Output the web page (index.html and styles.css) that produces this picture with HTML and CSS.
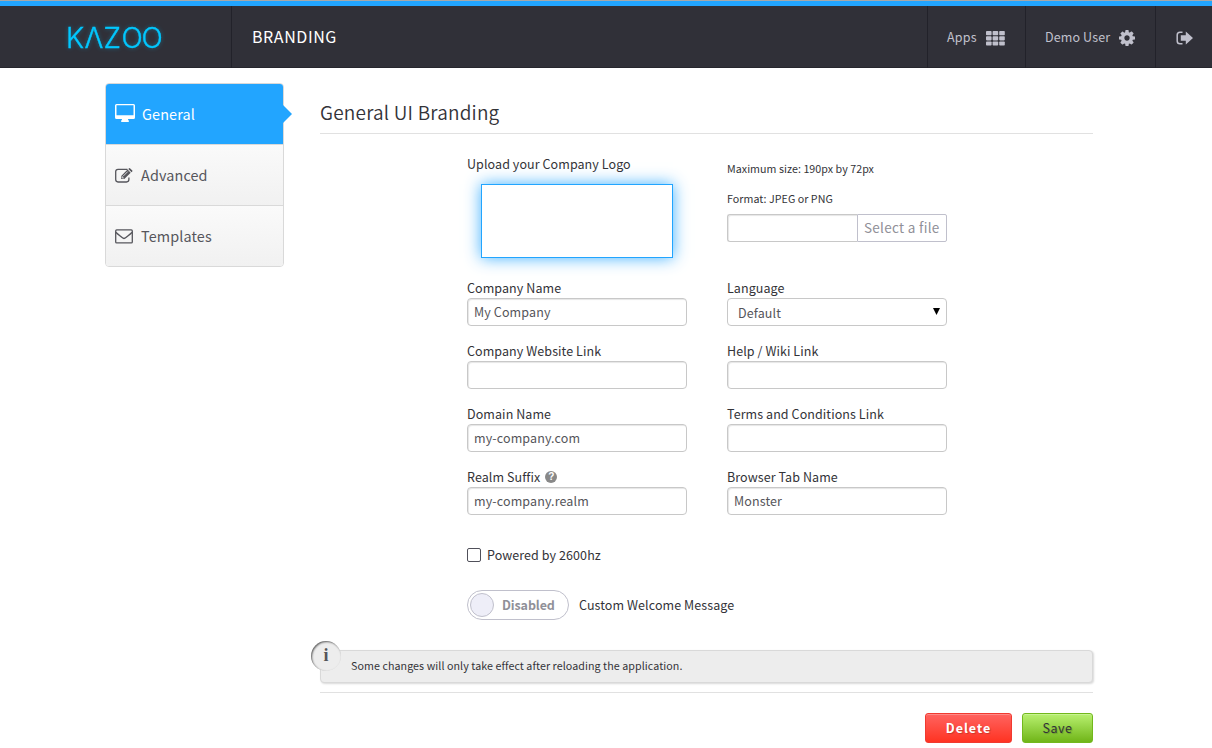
FILE: index.html
```html
<!DOCTYPE html>
<html lang="en">
<head>
<meta charset="utf-8">
<title>Monster</title>
<link rel="stylesheet" href="styles.css">
</head>
<body>
<header class="topbar">
  <div class="brand">
    <svg class="logo" width="110" height="34" viewBox="0 0 110 34" role="img" aria-label="Kazoo">
      <text class="logo-text" y="28" x="4 22.500 41.500 59.500 79.500">KΛZOO</text>
    </svg>
  </div>
  <div class="app-name">BRANDING</div>
  <nav class="topnav">
    <a class="nav-item nav-apps"><span>Apps</span>
      <svg width="19" height="15" viewBox="0 0 19 15" fill="currentColor"><rect width="5.6" height="4.2" rx=".8"/><rect x="6.6" width="5.6" height="4.2" rx=".8"/><rect x="13.2" width="5.6" height="4.2" rx=".8"/><rect y="5.2" width="5.6" height="4.2" rx=".8"/><rect x="6.6" y="5.2" width="5.6" height="4.2" rx=".8"/><rect x="13.2" y="5.2" width="5.6" height="4.2" rx=".8"/><rect y="10.4" width="5.6" height="4.2" rx=".8"/><rect x="6.6" y="10.4" width="5.6" height="4.2" rx=".8"/><rect x="13.2" y="10.4" width="5.6" height="4.2" rx=".8"/></svg>
    </a>
    <a class="nav-item nav-user"><span>Demo User</span>
      <svg width="16" height="16" viewBox="0 0 1536 1536" fill="currentColor"><path d="M1024 768q0-106-75-181t-181-75-181 75-75 181 75 181 181 75 181-75 75-181zm512-109v222q0 12-8 23t-20 13l-185 28q-19 54-39 91 35 50 107 138 10 12 10 25t-9 23q-27 37-99 108t-94 71q-12 0-26-9l-138-108q-44 23-91 38-16 136-29 186-7 28-36 28H657q-14 0-24.500-8.500T621 1506l-28-184q-49-16-90-37l-141 107q-10 9-25 9-14 0-25-11-126-114-165-168-7-10-7-23 0-12 8-23 15-21 51-66.500t54-70.500q-27-50-41-99L29 913q-13-2-21-12.500T0 877V655q0-12 8-23t19-13l186-28q14-46 39-92-40-57-107-138-10-12-10-24 0-10 9-23 26-36 98.500-107.500T337 135q13 0 26 10l138 107q44-23 91-38 16-136 29-186 7-28 36-28h222q14 0 24.500 8.500T915 30l28 184q49 16 90 37l142-107q9-9 24-9 13 0 25 10 129 119 165 170 7 8 7 22 0 12-8 23-15 21-51 66.500t-54 70.500q26 50 41 98l183 28q13 2 21 12.500t8 23.500z"/></svg>
    </a>
    <a class="nav-item nav-exit">
      <svg width="18" height="14" viewBox="0 0 18 14"><path d="M6.500 1.200H4Q1.200 1.200 1.200 4v6q0 2.800 2.800 2.800h2.500" fill="none" stroke="currentColor" stroke-width="1.500"/><path d="M4.800 4.300h5V.6L17 7l-7.200 6.400V9.700h-5z" fill="currentColor"/></svg>
    </a>
  </nav>
</header>
<main class="page">
  <aside class="menu">
    <a class="menu-item active">
      <svg width="20" height="18" viewBox="0 0 20 18"><path fill-rule="evenodd" fill="currentColor" d="M1.500 0h17Q20 0 20 1.500v12q0 1.500-1.500 1.500H13q0 1 .8 1.600V18H6.200v-1.400Q7 16 7 15H1.500Q0 15 0 13.500v-12Q0 0 1.500 0zm0 1.300v10h17v-10z"/></svg>
      <span>General</span></a>
    <a class="menu-item">
      <svg width="18" height="15" viewBox="0 0 18 15"><path d="M12.500 1.300H3Q.7 1.300.7 3.600v8q0 2.400 2.300 2.400h8.500q2.400 0 2.400-2.400V9.500" fill="none" stroke="currentColor" stroke-width="1.300"/><path d="M6.200 11.100V8L12.600 1.600l3.100 3.100-6.400 6.400zM13.300.9l.5-.5q.7-.7 1.400 0l1.900 1.900q.7.7 0 1.400l-.6.500z" fill="currentColor"/><path d="M8 8.300l4.800-4.800M7.200 8.300v1.700h1.700" stroke="#f6f6f6" stroke-width=".8" fill="none"/></svg>
      <span>Advanced</span></a>
    <a class="menu-item">
      <svg width="18" height="15" viewBox="0 0 18 15" fill="none" stroke="currentColor" stroke-width="1.300"><rect x=".7" y=".9" width="16.600" height="13" rx="1"/><path d="M.8 3.200Q2 4.500 5.500 7.200 8 9.500 9 9.500t3.500-2.300Q16 4.500 17.200 3.200"/></svg>
      <span>Templates</span></a>
  </aside>
  <section class="content">
    <h1 class="title">General UI Branding</h1>
    <form class="form">
      <div class="upload-row">
        <div class="col">
          <label class="label">Upload your Company Logo</label>
          <div class="logo-drop"></div>
        </div>
        <div class="col specs">
          <p class="spec">Maximum size: 190px by 72px</p>
          <p class="spec">Format: JPEG or PNG</p>
          <div class="file"><span class="file-name"></span><span class="file-btn">Select a file</span></div>
        </div>
      </div>
      <div class="grid">
        <div class="field"><label class="label">Company Name</label><div class="input">My Company</div></div>
        <div class="field"><label class="label">Language</label><div class="input select"><span>Default</span><svg width="7" height="7" viewBox="0 0 7 7"><path d="M0 0h7L3.500 7z"/></svg></div></div>
        <div class="field"><label class="label">Company Website Link</label><div class="input"></div></div>
        <div class="field"><label class="label">Help / Wiki Link</label><div class="input"></div></div>
        <div class="field"><label class="label">Domain Name</label><div class="input">my-company.com</div></div>
        <div class="field"><label class="label">Terms and Conditions Link</label><div class="input"></div></div>
        <div class="field"><label class="label label-help">Realm Suffix <span class="help">?</span></label><div class="input">my-company.realm</div></div>
        <div class="field"><label class="label">Browser Tab Name</label><div class="input">Monster</div></div>
      </div>
      <div class="check-row"><span class="checkbox"></span><span class="label">Powered by 2600hz</span></div>
      <div class="switch-row"><span class="switch"><span class="knob"></span><span class="switch-text">Disabled</span></span><span class="label">Custom Welcome Message</span></div>
    </form>
    <div class="notice"><span class="info">i</span><span>Some changes will only take effect after reloading the application.</span></div>
    <div class="actions"><a class="btn delete">Delete</a><a class="btn save">Save</a></div>
  </section>
</main>
</body>
</html>
```

FILE: styles.css
```css
* { box-sizing: border-box; }
body {
  margin: 0;
  height: 748px;
  overflow: hidden;
  background: #fff;
  color: #333338;
  font: 12.5px/20px "Noto Sans CJK SC", "Noto Sans", sans-serif;
  letter-spacing: .08px;
}
svg { display: block; flex: none; }
.topbar {
  display: flex;
  height: 68px;
  border-top: 6px solid #22a5ff;
  box-shadow: inset 0 -1px #26262d, inset 0 0 #000;
  background: #303038;
  position: relative;
}
.topbar::before {
  content: "";
  position: absolute;
  top: -6px;
  left: 0;
  right: 0;
  height: 1px;
  background: #a8a8a8;
}
.brand { width: 232px; border-right: 1px solid #22222a; padding: 14px 0 0 62px; }
.logo { overflow: visible; filter: drop-shadow(0 0 2px rgba(0, 180, 240, .4)); }
.logo-text { font: 300 28px Inter, sans-serif; fill: #00c8ff; stroke: #00c8ff; stroke-width: .4; letter-spacing: 0; }
.app-name { padding: 20px 0 0 20px; color: #fff; font-size: 16px; letter-spacing: .6px; }
.topnav { display: flex; margin-left: auto; color: #c0c0cc; }
.nav-item { display: flex; align-items: center; border-left: 1px solid #22222a; height: 62px; }
.nav-apps { width: 98px; padding-left: 19px; gap: 9px; letter-spacing: .25px; }
.nav-user { width: 130px; padding-left: 19px; gap: 9px; letter-spacing: .12px; }
.nav-exit { width: 57px; padding-left: 20px; }
.nav-item svg { position: relative; top: 1px; }

.page { display: flex; padding: 15px 0 0 105px; }
.menu { width: 179px; height: 184px; border: 1px solid #d9d9d9; border-radius: 4px; }
.menu-item {
  display: flex;
  align-items: center;
  gap: 8px;
  height: 61px;
  padding-left: 9px;
  border-bottom: 1px solid #d9d9d9;
  background: linear-gradient(#fafafa, #f1f1f1);
  color: #56565c;
  font-size: 14.4px;
  letter-spacing: .13px;
}
.menu-item:last-child { height: 60px; border-bottom: 0; border-radius: 0 0 3px 3px; }
.menu-item.active { position: relative; gap: 7px; background: #22a5ff; color: #fff; border-radius: 3px 3px 0 0; }
.active svg { position: relative; top: -1px; }
.active::after {
  content: "";
  position: absolute;
  left: 177px;
  top: 21px;
  border: 9px solid transparent;
  border-left-color: #22a5ff;
  border-right: 0;
}
.content { width: 773px; margin-left: 36px; }
.title {
  margin: 0;
  height: 51px;
  padding-top: 14px;
  border-bottom: 1px solid #e1e1e1;
  font-weight: 350;
  font-size: 19px;
  letter-spacing: .2px;
  line-height: 30px;
}
.form { padding: 20px 0 0 147px; }
.label { display: block; }
.upload-row { display: flex; gap: 40px; height: 124px; }
.col { width: 220px; }
.logo-drop {
  width: 192px;
  height: 74px;
  margin: 10px 0 0 14px;
  border: 1px solid #22a5ff;
  box-shadow: 0 0 15px rgba(34, 165, 255, .85);
}
.specs { padding-top: 5px; }
.spec { margin: 0 0 10px; font-size: 10.7px; letter-spacing: .04px; }
.file { display: flex; height: 28px; margin-top: -5px; }
.file-name { width: 130px; border: 1px solid #c8c8c8; border-right: 0; border-radius: 3px 0 0 3px; box-shadow: inset 1px 1px 1px rgba(0, 0, 0, .1); }
.file-btn { width: 90px; border: 1px solid #c0c0cc; border-radius: 0 2px 2px 0; padding-left: 6px; line-height: 25px; color: #909098; font-size: 13.5px; letter-spacing: .3px; }
.grid { display: grid; grid-template-columns: 220px 220px; column-gap: 40px; row-gap: 15px; }
.input {
  height: 28px;
  border: 1px solid #c8c8c8;
  border-radius: 4px;
  box-shadow: inset 1px 1px 1px rgba(0, 0, 0, .1);
  padding-left: 6px;
  line-height: 26px;
  color: #55555a;
  letter-spacing: .12px;
}
.select { display: flex; justify-content: space-between; padding: 1px 6px 0 10px; box-shadow: none; }
.select svg { margin-top: 8px; }
.label-help { display: flex; align-items: center; gap: 5px; }
.help {
  width: 12px;
  height: 12px;
  border-radius: 50%;
  background: #888;
  color: #fff;
  font: bold 10px/12px "Liberation Sans", sans-serif;
  letter-spacing: 0;
  text-align: center;
}
.check-row { display: flex; align-items: center; gap: 6px; margin-top: 30px; }
.checkbox { width: 14px; height: 14px; border: 1px solid #50505a; border-radius: 2px; }
.switch-row { display: flex; align-items: center; gap: 10px; margin-top: 25px; }
.switch { display: flex; align-items: center; gap: 8px; width: 102px; height: 30px; padding-left: 2px; border: 1px solid #c0c0cc; border-radius: 15px; }
.knob { width: 24px; height: 24px; border: 1px solid #c0c0cc; border-radius: 50%; background: #eeeef8; }
.switch-text { font-weight: 700; color: #909098; letter-spacing: -.1px; }
.notice {
  position: relative;
  height: 33px;
  margin-top: 30px;
  padding-left: 30px;
  border: 1px solid #d9d9d9;
  border-radius: 4px;
  background: #ededed;
  box-shadow: 1px 1px 2px rgba(0, 0, 0, .15);
  font-size: 10.7px;
  letter-spacing: .07px;
  line-height: 30px;
}
.info {
  position: absolute;
  left: -10px;
  top: -10px;
  width: 30px;
  height: 30px;
  border-radius: 50%;
  background: #ededed;
  box-shadow: inset 1px 1px 2px rgba(0, 0, 0, .6);
  text-align: center;
  color: #55555a;
  font: bold 18px/28px "Liberation Serif", serif;
}
.actions { display: flex; justify-content: flex-end; gap: 10px; margin-top: 9px; padding-top: 20px; border-top: 1px solid #e1e1e1; }
.btn { height: 30px; border: 1px solid; border-radius: 3px; line-height: 28px; text-align: center; box-shadow: inset 0 1px rgba(255, 255, 255, .25); letter-spacing: .5px; }
.delete { width: 87px; background: linear-gradient(#ff6460, #ff3322); border-color: #f03a30; color: #fff; font-weight: 700; letter-spacing: 1px; text-shadow: 1px 1px 1px rgba(0, 0, 0, .2); }
.save { width: 71px; background: linear-gradient(#b8f070, #70b518); border-color: #72b81c; text-shadow: 1px 1px 1px rgba(0, 0, 0, .2); }
```
